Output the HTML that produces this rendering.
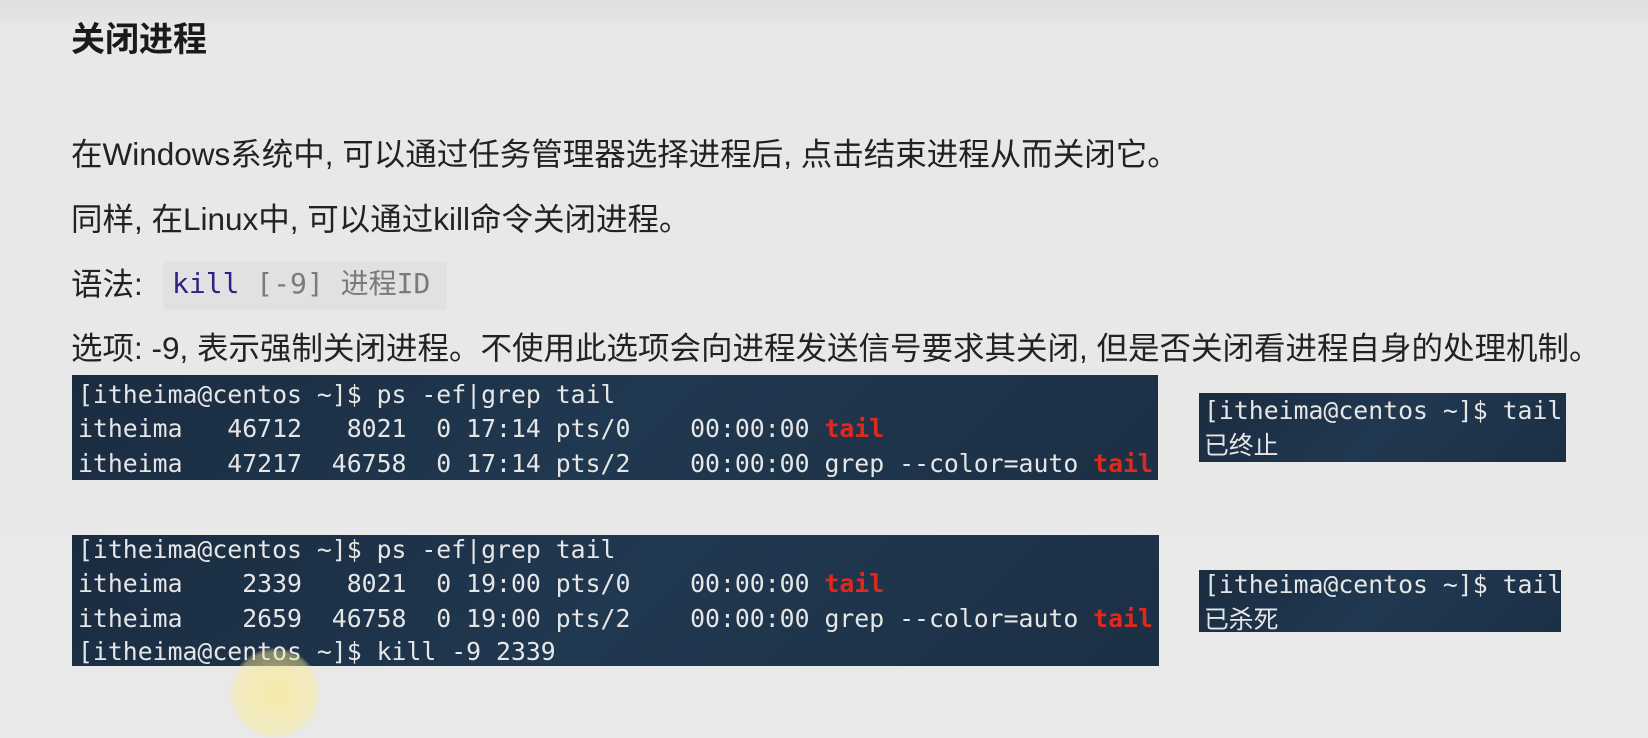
<!DOCTYPE html>
<html style="background:#e9e9e9"><head><meta charset="utf-8"><style>
html,body{margin:0;padding:0;}
body{width:1648px;height:705px;overflow:hidden;position:relative;background:linear-gradient(#dedede 0px,#e8e8e8 30px,#e9e9e9 100%);font-family:"Liberation Sans","Noto Sans CJK SC",sans-serif;color:#222;}
.t{position:absolute;white-space:nowrap;line-height:1;}
.p{font-size:31.5px;left:71px;}
.term{position:absolute;background:linear-gradient(135deg,#1a2c40,#203850 50%,#1c3045);}
.mono{font-family:"DejaVu Sans Mono","Noto Sans CJK SC",monospace;}
.tl{position:absolute;white-space:pre;font-family:"DejaVu Sans Mono","Noto Sans CJK SC",monospace;font-size:24.8px;color:#e6e6e6;line-height:1;}
.r{color:#e0281c;font-weight:bold;}
</style></head><body>
<div class="t" style="left:71px;top:23px;font-size:34px;font-weight:bold;color:#1a1a1a;">关闭进程</div>
<div class="t p" style="top:139px;">在Windows系统中, 可以通过任务管理器选择进程后, 点击结束进程从而关闭它。</div>
<div class="t p" style="top:204px;">同样, 在Linux中, 可以通过kill命令关闭进程。</div>
<div class="t p" style="top:269px;">语法:</div>
<div style="position:absolute;left:163px;top:262px;width:284px;height:48px;background:#e1e1e1;border-radius:3px;"></div>
<div class="t mono" style="left:172px;top:270px;font-size:28px;"><span style="color:#2f2382">kill</span> <span style="color:#7a7a7a">[-9] 进程ID</span></div>
<div class="t p" style="top:333px;">选项: -9, 表示强制关闭进程。不使用此选项会向进程发送信号要求其关闭, 但是否关闭看进程自身的处理机制。</div>

<div class="term" style="left:72px;top:375px;width:1086px;height:105px;"></div>
<div class="tl" style="left:78px;top:383px;">[itheima@centos ~]$ ps -ef|grep tail</div>
<div class="tl" style="left:78px;top:417px;">itheima   46712   8021  0 17:14 pts/0    00:00:00 <span class="r">tail</span></div>
<div class="tl" style="left:78px;top:452px;">itheima   47217  46758  0 17:14 pts/2    00:00:00 grep --color=auto <span class="r">tail</span></div>

<div class="term" style="left:72px;top:535px;width:1087px;height:131px;"></div>
<div class="tl" style="left:78px;top:538px;">[itheima@centos ~]$ ps -ef|grep tail</div>
<div class="tl" style="left:78px;top:572px;">itheima    2339   8021  0 19:00 pts/0    00:00:00 <span class="r">tail</span></div>
<div class="tl" style="left:78px;top:607px;">itheima    2659  46758  0 19:00 pts/2    00:00:00 grep --color=auto <span class="r">tail</span></div>
<div class="tl" style="left:78px;top:640px;">[itheima@centos ~]$ kill -9 2339</div>

<div class="term" style="left:1199px;top:393px;width:367px;height:69px;"></div>
<div class="tl" style="left:1204px;top:399px;">[itheima@centos ~]$ tail</div>
<div class="tl" style="left:1204px;top:434px;">已终止</div>

<div class="term" style="left:1199px;top:570px;width:362px;height:62px;"></div>
<div class="tl" style="left:1204px;top:573px;">[itheima@centos ~]$ tail</div>
<div class="tl" style="left:1204px;top:608px;">已杀死</div>

<div style="position:absolute;left:230px;top:648px;width:90px;height:90px;border-radius:50%;background:radial-gradient(circle,rgba(250,235,150,0.75),rgba(250,235,150,0.45) 65%,rgba(250,235,150,0) 72%);"></div>
</body></html>
